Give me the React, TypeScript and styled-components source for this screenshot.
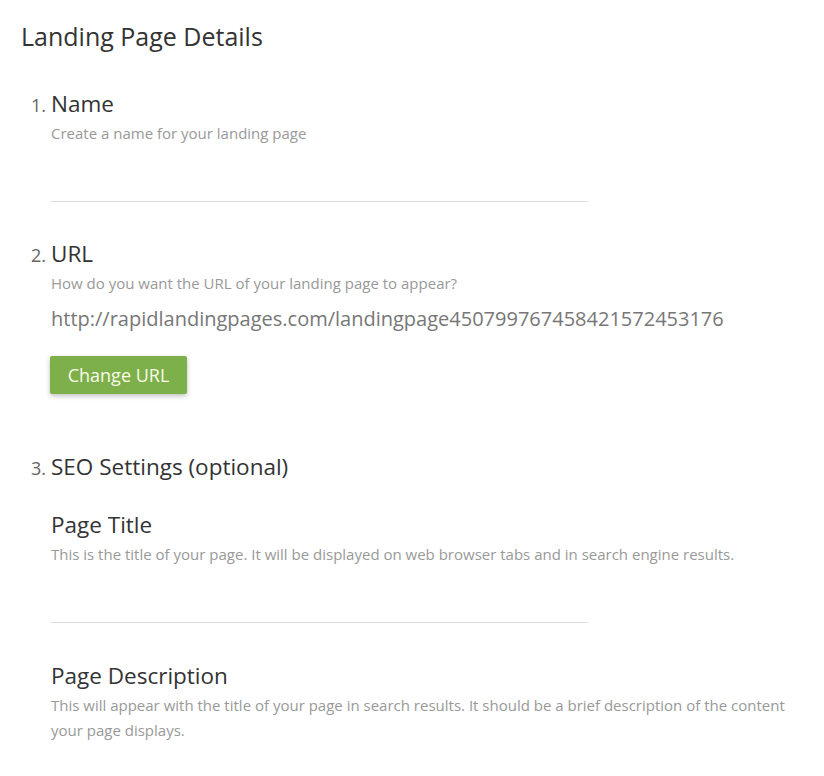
import React from 'react'
import styled, { createGlobalStyle } from 'styled-components'

const GlobalStyle = createGlobalStyle`
  body {
    margin: 0;
    background: #fff;
    font-family: "Open Sans", "Noto Sans", sans-serif;
  }
`

const Page = styled.div`
  padding: 20px 0 0 21px;
`

const Title = styled.h1`
  margin: 0 0 38px;
  font-size: 25px;
  line-height: 32px;
  font-weight: 400;
  color: #333;
`

const Step = styled.section<{ $gap?: number }>`
  display: grid;
  grid-template-columns: 30px 1fr;
  align-items: baseline;
  margin-bottom: ${props => props.$gap ?? 38}px;
`

const StepNumber = styled.span`
  justify-self: end;
  padding-right: 5px;
  font-size: 18px;
  line-height: 28px;
  color: #666;
`

const StepBody = styled.div`
  min-width: 0;
`

const StepHeading = styled.h2`
  margin: 0 0 3px;
  font-size: 22.5px;
  line-height: 28px;
  font-weight: 400;
  color: #333;
`

const Help = styled.p`
  margin: 0;
  max-width: 740px;
  font-size: 15px;
  line-height: 25px;
  color: #999;
`

const LineInput = styled.input`
  display: block;
  box-sizing: border-box;
  width: 537px;
  height: 40px;
  margin-top: 16px;
  padding: 0;
  border: none;
  border-bottom: 1px solid #ddd;
  outline: none;
  background: transparent;
  font-family: inherit;
  font-size: 16px;
  color: #333;
`

const UrlText = styled.div`
  margin-top: 9px;
  font-size: 20px;
  line-height: 28px;
  color: #777;
`

const GreenButton = styled.button`
  margin: 23px 0 0 -1px;
  width: 137px;
  height: 38px;
  padding: 0;
  border: none;
  border-radius: 2px;
  background: #7daf4a;
  box-shadow: 0 2px 5px rgba(0, 0, 0, 0.25);
  font-family: inherit;
  font-size: 18px;
  color: #fafbea;
  cursor: pointer;
`

const Field = styled.div<{ $gap?: number }>`
  margin-top: ${props => props.$gap ?? 0}px;
`

export default function App() {
  return (
    <Page>
      <GlobalStyle />
      <Title>Landing Page Details</Title>

      <Step>
        <StepNumber>1.</StepNumber>
        <StepBody>
          <StepHeading>Name</StepHeading>
          <Help>Create a name for your landing page</Help>
          <LineInput />
        </StepBody>
      </Step>

      <Step $gap={59}>
        <StepNumber>2.</StepNumber>
        <StepBody>
          <StepHeading>URL</StepHeading>
          <Help>How do you want the URL of your landing page to appear?</Help>
          <UrlText>http://rapidlandingpages.com/landingpage450799767458421572453176</UrlText>
          <GreenButton>Change URL</GreenButton>
        </StepBody>
      </Step>

      <Step>
        <StepNumber>3.</StepNumber>
        <StepBody>
          <StepHeading>SEO Settings (optional)</StepHeading>
          <Field $gap={30}>
            <StepHeading>Page Title</StepHeading>
            <Help>This is the title of your page. It will be displayed on web browser tabs and in search engine results.</Help>
            <LineInput />
          </Field>
          <Field $gap={39}>
            <StepHeading>Page Description</StepHeading>
            <Help>This will appear with the title of your page in search results. It should be a brief description of the content your page displays.</Help>
          </Field>
        </StepBody>
      </Step>
    </Page>
  )
}
